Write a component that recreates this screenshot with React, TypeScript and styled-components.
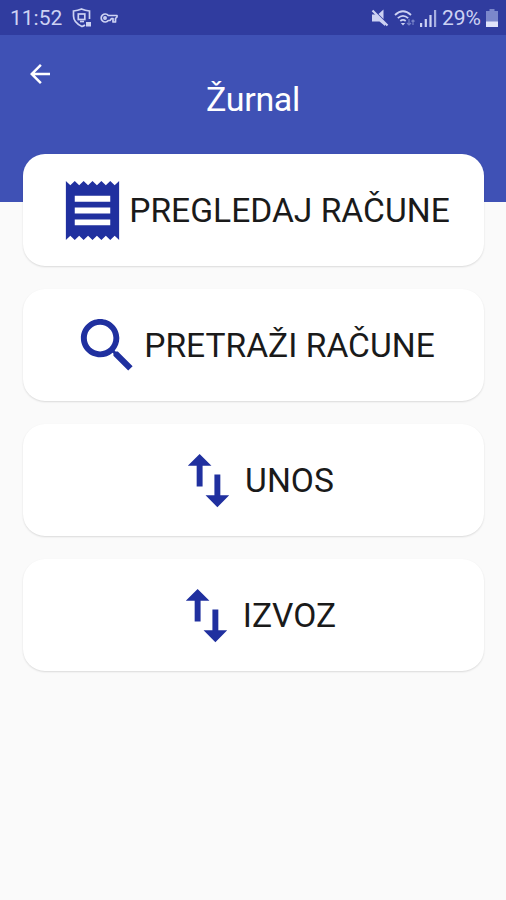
import React from "react";
import styled, { createGlobalStyle } from "styled-components";

const GlobalStyle = createGlobalStyle`
  * { box-sizing: border-box; }
  body { margin: 0; background: #fafafa; font-family: Roboto, "Liberation Sans", sans-serif; }
`;

const Screen = styled.div`
  width: 506px;
  height: 900px;
  overflow: hidden;
  background: #fafafa;
`;

const StatusBar = styled.div`
  display: flex;
  align-items: center;
  justify-content: space-between;
  height: 35px;
  padding: 0 8px 0 10px;
  background: #303c9f;
  color: #cdd2f3;
  font-size: 21px;
  line-height: 35px;
`;

const StatusGroup = styled.div<{ $gap: number }>`
  display: flex;
  align-items: center;
  gap: ${(p) => p.$gap}px;
`;

const StatusText = styled.span<{ $width: number }>`
  width: ${(p) => p.$width}px;
  padding-top: 1px;
  white-space: nowrap;
`;

const Header = styled.header`
  height: 167px;
  padding-top: 24px;
  background: #3f51b5;
  color: #fff;
`;

const BackButton = styled.button`
  display: block;
  width: 30px;
  height: 30px;
  margin-left: 25px;
  padding: 0;
  border: 0;
  background: none;
  color: inherit;
`;

const Title = styled.h1`
  margin: -10px 0 0;
  text-align: center;
  font-size: 34px;
  font-weight: 400;
  line-height: 40px;
  letter-spacing: -0.3px;
`;

const Menu = styled.main`
  display: flex;
  flex-direction: column;
  gap: 23px;
  margin-top: -48px;
  padding: 0 22px 0 23px;
`;

const Card = styled.button`
  display: flex;
  align-items: center;
  justify-content: center;
  gap: 1px;
  height: 112px;
  padding: 0;
  border: 0;
  border-radius: 22px;
  background: #fff;
  box-shadow: 0 1px 2px rgba(0, 0, 0, 0.13);
  color: #1a1a1a;
  font-family: inherit;
`;

const CardIcon = styled.svg`
  flex: none;
  width: 71px;
  height: 71px;
  fill: #20309f;
`;

const Label = styled.span`
  padding-top: 2px;
  font-size: 33.6px;
  font-weight: 400;
  line-height: 40px;
  white-space: nowrap;
`;

const RECEIPT =
  "M18 17H6v-2h12v2zm0-4H6v-2h12v2zm0-4H6V7h12v2zM3 22l1.5-1.5L6 22l1.5-1.5L9 22l1.5-1.5L12 22l1.5-1.5L15 22l1.5-1.5L18 22l1.5-1.5L21 22V2l-1.5 1.5L18 2l-1.5 1.5L15 2l-1.5 1.5L12 2l-1.5 1.5L9 2 7.5 3.5 6 2 4.5 3.5 3 2v20z";
const SEARCH =
  "M15.5 14h-.79l-.28-.27C15.41 12.59 16 11.11 16 9.5 16 5.91 13.09 3 9.5 3S3 5.91 3 9.5 5.91 16 9.5 16c1.61 0 3.09-.59 4.23-1.57l.27.28v.79l5 4.99L20.49 19l-4.99-5zm-6 0C7.01 14 5 11.99 5 9.5S7.01 5 9.5 5 14 7.01 14 9.5 11.99 14 9.5 14z";
const IMPORT_EXPORT =
  "M9 3L5 6.99h3V14h2V6.99h3L9 3zm7 14.01V10h-2v7.01h-3L15 21l4-3.99h-3z";

const items = [
  { label: "PREGLEDAJ RAČUNE", icon: RECEIPT },
  { label: "PRETRAŽI RAČUNE", icon: SEARCH },
  { label: "UNOS", icon: IMPORT_EXPORT },
  { label: "IZVOZ", icon: IMPORT_EXPORT },
];

const ShieldIcon = () => (
  <svg width="20" height="20" viewBox="0 0 20 20" fill="none" stroke="#cdd2f3" strokeWidth="1.7">
    <path d="M13 17 Q11.5 18 10 18.500 Q1.500 14.500 1.500 8V3Q6 2.500 9.500 1Q13 2.500 17.500 3V11" />
    <rect x="6.300" y="6" width="6.500" height="5.500" />
    <path d="M8 13.500h4" />
    <rect x="14" y="14" width="5" height="4.500" fill="#cdd2f3" stroke="none" />
  </svg>
);

const KeyIcon = () => (
  <svg width="18" height="12" viewBox="0 0 18 12" fill="none" stroke="#cdd2f3" strokeWidth="1.700">
    <path d="M8.300 3.500A4 4 0 1 0 8.300 8.500H10L11.500 6.500H13V10H15.500V6.500L17 5V3.500Z" strokeLinejoin="round" />
    <circle cx="5" cy="6" r="1.100" />
  </svg>
);

const MuteIcon = () => (
  <svg width="18" height="18" viewBox="0 0 18 18" fill="#cdd2f3">
    <path d="M1 5.500h4L14 14.500V17L8.500 12.500H1zM7.500 5L12.500 0.500V10z" />
    <path d="M1.500 1.500L16.500 16.500" stroke="#cdd2f3" strokeWidth="2.200" />
  </svg>
);

const WifiIcon = () => (
  <svg width="21" height="18" viewBox="0 0 21 18" fill="none" stroke="#cdd2f3" strokeWidth="1.800">
    <path d="M1 6Q9 -1.500 17 6M3.800 9.200Q9 4.500 14.200 9.200M6.300 12Q9 9.800 11.700 12" />
    <path d="M9 16.500l-2.200-2.600h4.400z" fill="#cdd2f3" stroke="none" />
    <path d="M15 10v6m-2-2l2 2 2-2M19 16v-5m-1.500 1.500L19 11l1.500 1.500" stroke="#7580c7" strokeWidth="1.200" />
  </svg>
);

const SignalIcon = () => (
  <svg width="17" height="18" viewBox="0 0 17 18" fill="#cdd2f3">
    <path d="M0 14h2.200v4H0zM4.700 10h2.200v8H4.700zM9.400 6h2.200v12H9.400z" />
    <path d="M14 1h2.200v17H14z" fill="#a6aee0" />
  </svg>
);

const BatteryIcon = () => (
  <svg width="12" height="18" viewBox="0 0 12 18">
    <path d="M3.500 0h5v2H12v16H0V2h3.500z" fill="#7b87cb" />
    <path d="M0 12.500h12V18H0z" fill="#e0e3fa" />
  </svg>
);

export default function App() {
  return (
    <Screen>
      <GlobalStyle />
      <StatusBar>
        <StatusGroup $gap={8.5}>
          <StatusText $width={53}>11:52</StatusText>
          <ShieldIcon />
          <KeyIcon />
        </StatusGroup>
        <StatusGroup $gap={5}>
          <MuteIcon />
          <WifiIcon />
          <SignalIcon />
          <StatusText $width={39}>29%</StatusText>
          <BatteryIcon />
        </StatusGroup>
      </StatusBar>
      <Header>
        <BackButton aria-label="Natrag">
          <svg width="30" height="30" viewBox="0 0 24 24" fill="currentColor">
            <path d="M20 11H7.830l5.590-5.590L12 4l-8 8 8 8 1.410-1.410L7.830 13H20v-2z" />
          </svg>
        </BackButton>
        <Title>Žurnal</Title>
      </Header>
      <Menu>
        {items.map((item) => (
          <Card key={item.label}>
            <CardIcon viewBox="0 0 24 24">
              <path d={item.icon} />
            </CardIcon>
            <Label>{item.label}</Label>
          </Card>
        ))}
      </Menu>
    </Screen>
  );
}
